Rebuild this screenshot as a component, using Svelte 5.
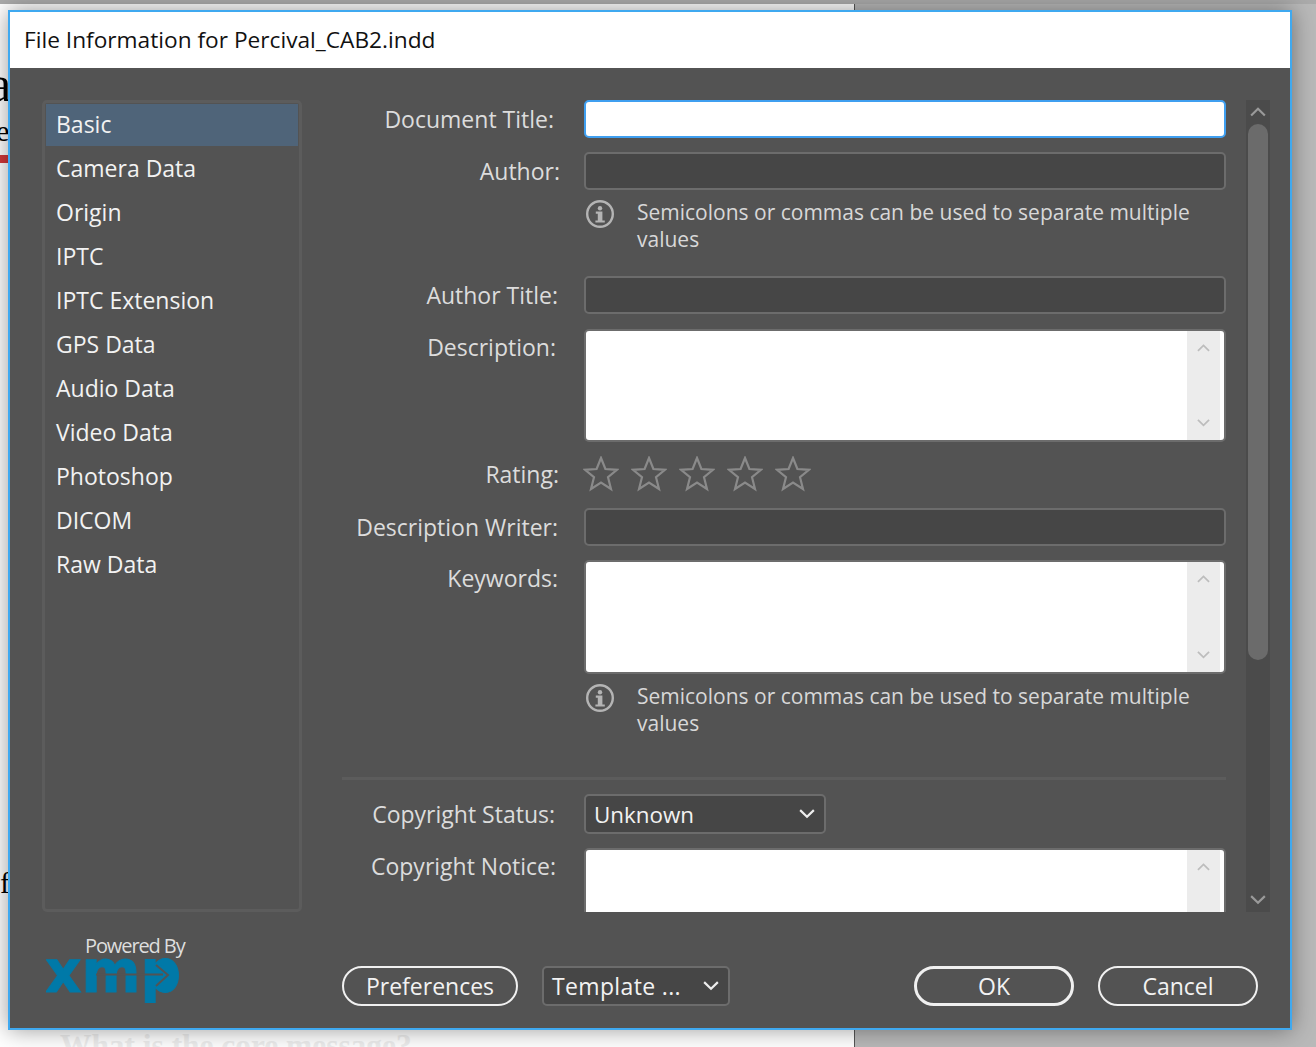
<script lang="ts">
  const categories = ['Basic', 'Camera Data', 'Origin', 'IPTC', 'IPTC Extension', 'GPS Data', 'Audio Data', 'Video Data', 'Photoshop', 'DICOM', 'Raw Data']
  const note = 'Semicolons or commas can be used to separate multiple values'
  const star = 'M18 2 L22.4 13 L34 13.8 L25 21.2 L28 33 L18 26.6 L8 33 L11 21.2 L2 13.8 L13.6 13 Z'
</script>

{#snippet chevron(up, w = 14)}
  <svg class="chev" width={w} height={w * 0.6} viewBox="0 0 14 8.4">
    <path d={up ? 'M1 7.4 L7 1.6 L13 7.4' : 'M1 1 L7 6.8 L13 1'} fill="none" stroke="currentColor" stroke-width="1.9" />
  </svg>
{/snippet}

{#snippet info()}
  <svg class="info" width="30" height="30" viewBox="0 0 30 30">
    <circle cx="15" cy="15" r="12.8" fill="none" stroke="#b4b4b4" stroke-width="2.4" />
    <circle cx="15" cy="9.3" r="2.2" fill="#b4b4b4" />
    <path d="M10.8 12.6 H17.4 V21.4 H19.8 V23.6 H10.4 V21.4 H12.8 V14.8 H10.8 Z" fill="#b4b4b4" />
  </svg>
{/snippet}

{#snippet scrollbox(cls)}
  <div class="area {cls}">
    <div class="area-bar">
      {@render chevron(true, 13)}
      {@render chevron(false, 13)}
    </div>
  </div>
{/snippet}

<div class="desktop">
  <div class="strip"></div>
  <div class="paper">
    <span class="d-a">a</span>
    <span class="d-e">e</span>
    <span class="d-red"></span>
    <span class="d-f">f</span>
    <span class="d-q">What is the core message?</span>
  </div>

  <section class="dialog">
    <header>File Information for Percival_CAB2.indd</header>

    <div class="body">
      <div class="main">
        <ul class="cats">
          {#each categories as cat, i}
            <li class:active={i === 0}>{cat}</li>
          {/each}
        </ul>

        <div class="form-wrap">
          <div class="form">
            <div class="row r-doc">
              <label class="p7">Document Title:</label>
              <div class="input focus"></div>
            </div>
            <div class="row r-author">
              <label class="p1">Author:</label>
              <div class="input"></div>
            </div>
            <div class="note r-note1">
              {@render info()}
              <p>{note}</p>
            </div>
            <div class="row r-atitle">
              <label class="p3">Author Title:</label>
              <div class="input"></div>
            </div>
            <div class="row r-desc">
              <label class="p5 top">Description:</label>
              {@render scrollbox('h113')}
            </div>
            <div class="row r-rating">
              <label class="p2">Rating:</label>
              <div class="stars">
                {#each [0, 1, 2, 3, 4] as s (s)}
                  <svg width="36" height="36" viewBox="0 0 36 36"><path d={star} fill="none" stroke="#8a8a8a" stroke-width="2.2" /></svg>
                {/each}
              </div>
            </div>
            <div class="row r-writer">
              <label class="p3">Description Writer:</label>
              <div class="input"></div>
            </div>
            <div class="row r-key">
              <label class="p3 top">Keywords:</label>
              {@render scrollbox('h114')}
            </div>
            <div class="note r-note2">
              {@render info()}
              <p>{note}</p>
            </div>
            <hr />
            <div class="row r-status">
              <label class="p6">Copyright Status:</label>
              <div class="select wide"><span class="unknown">Unknown</span> {@render chevron(false, 16)}</div>
            </div>
            <div class="row r-notice">
              <label class="p5 top">Copyright Notice:</label>
              {@render scrollbox('h113')}
            </div>
          </div>

          <div class="scrollbar">
            <span class="sb-up">{@render chevron(true, 16)}</span>
            <div class="thumb"></div>
            <span class="sb-down">{@render chevron(false, 16)}</span>
          </div>
        </div>
      </div>

      <footer>
        <div class="xmp">
          <span>Powered By</span>
          <svg width="138" height="46" viewBox="0 0 138 46">
            <text x="-1" y="35" textLength="136" lengthAdjust="spacingAndGlyphs" class="xmp-word">xmp</text>
            <rect x="103" y="9" width="24" height="19" fill="#0079a8" />
            <path d="M50 17.5 H117 M110 8 L122 18 L110 29" fill="none" stroke="#535353" stroke-width="2" />
          </svg>
        </div>
        <div class="buttons">
          <div class="left">
            <button class="pill pref">Preferences</button>
            <div class="select tmpl"><span class="tmpl-label">Template ...</span> {@render chevron(false, 16)}</div>
          </div>
          <div class="right">
            <button class="pill ok">OK</button>
            <button class="pill cancel">Cancel</button>
          </div>
        </div>
      </footer>
    </div>
  </section>
</div>

<style>
  :global(body) {
    margin: 0;
    background: #b9b9b9;
  }

  .desktop {
    position: relative;
    width: 1316px;
    height: 1047px;
    overflow: hidden;
    background: #b9b9b9;
    font-family: 'Open Sans', 'Noto Sans', sans-serif;
  }

  .strip {
    height: 4px;
    background: #ababab;
  }

  .paper {
    position: relative;
    width: 854px;
    height: 1043px;
    background: #fff;
    border-right: 1px solid #555;
    font-family: 'Liberation Serif', serif;
    color: #000;
  }

  .paper span {
    position: absolute;
  }

  .d-a {
    left: -11px;
    top: 50px;
    font-size: 50px;
    line-height: 60px;
  }

  .d-e {
    left: -4px;
    top: 110px;
    font-size: 30px;
    line-height: 34px;
  }

  .d-red {
    left: 0;
    top: 151px;
    width: 10px;
    height: 8px;
    background: #d2383a;
  }

  .d-f {
    left: 0;
    top: 862px;
    font-size: 30px;
    line-height: 34px;
  }

  .d-q {
    left: 60px;
    top: 1025px;
    font-size: 31.4px;
    line-height: 34px;
    font-weight: 700;
    color: #eeeeee;
    white-space: nowrap;
  }

  .dialog {
    position: absolute;
    left: 8px;
    top: 10px;
    width: 1284px;
    height: 1020px;
    box-sizing: border-box;
    border: 2px solid #3fa9f0;
    background: #535353;
    box-shadow: 0 0 22px rgba(0, 0, 0, 0.4);
    display: flex;
    flex-direction: column;
  }

  header {
    height: 56px;
    flex: none;
    background: #fff;
    color: #111;
    font-size: 22.7px;
    line-height: 56px;
    padding-left: 14px;
  }

  .body {
    flex: 1;
    display: flex;
    flex-direction: column;
    padding: 32px 20px 0 32px;
  }

  .main {
    display: flex;
    height: 812px;
    flex: none;
  }

  .cats {
    list-style: none;
    width: 260px;
    height: 812px;
    margin: 0;
    padding: 1px;
    box-sizing: border-box;
    border: 3px solid #5c5c5c;
    border-radius: 5px;
    flex: none;
  }

  .cats li {
    height: 44px;
    line-height: 40px;
    padding-left: 10px;
    font-size: 23px;
    color: #f2f2f2;
  }

  .cats li.active {
    height: 42px;
    margin-bottom: 2px;
    background: #4f6479;
  }

  .form-wrap {
    flex: 1;
    display: flex;
    min-width: 0;
  }

  .form {
    width: 884px;
    flex: none;
    margin-left: 40px;
    height: 812px;
    overflow: hidden;
  }

  .row {
    display: flex;
    align-items: center;
  }

  label {
    width: 242px;
    flex: none;
    box-sizing: border-box;
    text-align: right;
    font-size: 23px;
    color: #dcdcdc;
    white-space: nowrap;
  }

  label.top {
    align-self: flex-start;
    line-height: 36px;
  }

  .p1 { padding-right: 24px; }
  .p2 { padding-right: 25px; }
  .p3 { padding-right: 26px; }
  .p5 { padding-right: 28px; }
  .p6 { padding-right: 29px; }
  .p7 { padding-right: 30px; }

  .input {
    flex: 1;
    height: 38px;
    box-sizing: border-box;
    background: #464646;
    border: 2px solid #6c6c6c;
    border-radius: 5px;
  }

  .input.focus {
    background: #fff;
    border-color: #3f9ff0;
  }

  .area {
    flex: 1;
    box-sizing: border-box;
    background: #fff;
    border: 2px solid #6c6c6c;
    border-radius: 5px;
    display: flex;
    justify-content: flex-end;
    padding-right: 4px;
  }

  .h113 { height: 113px; }
  .h114 { height: 114px; }

  .area-bar {
    width: 33px;
    background: #ececec;
    color: #bdbdbd;
    display: flex;
    flex-direction: column;
    align-items: center;
    justify-content: space-between;
    padding: 13px 0 13px;
    box-sizing: border-box;
    height: 100%;
  }

  .note {
    display: flex;
    padding-left: 243px;
    margin-top: 10px;
    height: 52px;
  }

  .note :global(.info) {
    flex: none;
    margin-top: -1px;
  }

  .note p {
    margin: 0 0 0 22px;
    width: 590px;
    font-size: 21px;
    line-height: 27px;
    color: #d8d8d8;
    margin-top: -1px;
  }

  .r-doc { margin-top: 0; }
  .r-author { margin-top: 14px; }
  .r-atitle { margin-top: 24px; }
  .r-desc { margin-top: 15px; }
  .r-rating { margin-top: 14px; height: 36px; }
  .r-writer { margin-top: 16px; }
  .r-key { margin-top: 14px; }
  .r-status { margin-top: 14px; }
  .r-notice { margin-top: 14px; }

  .stars {
    display: flex;
    gap: 12px;
    margin-left: -1px;
  }

  hr {
    border: 0;
    height: 3px;
    background: #5c5c5c;
    margin: 41px 0 0 0;
  }

  .select {
    box-sizing: border-box;
    height: 40px;
    background: #464646;
    border: 2px solid #6c6c6c;
    border-radius: 5px;
    color: #f2f2f2;
    font-size: 23px;
    line-height: 35px;
    display: flex;
    justify-content: space-between;
    align-items: center;
  }

  .select :global(.chev) {
    color: #eee;
  }

  .unknown {
    font-size: 22.4px;
  }

  .tmpl-label {
    letter-spacing: 0.35px;
  }

  .wide {
    width: 242px;
    padding: 0 9px 0 8px;
  }

  .tmpl {
    width: 188px;
    padding: 0 9px 0 8px;
  }

  .scrollbar {
    width: 24px;
    height: 812px;
    margin-left: 20px;
    background: #4b4b4b;
    display: flex;
    flex-direction: column;
    align-items: center;
    color: #9a9a9a;
    flex: none;
    position: relative;
  }

  .sb-up {
    height: 24px;
    display: flex;
    align-items: center;
  }

  .thumb {
    width: 20px;
    height: 536px;
    background: #6b6b6b;
    border-radius: 10px;
  }

  .sb-down {
    margin-top: auto;
    height: 24px;
    display: flex;
    align-items: center;
  }

  footer {
    display: flex;
    flex: 1;
    position: relative;
  }

  .xmp {
    width: 300px;
    flex: none;
    display: flex;
    flex-direction: column;
    padding: 21px 0 0 4px;
    box-sizing: border-box;
  }

  .xmp span {
    font-size: 20px;
    line-height: 26px;
    color: #dedede;
    padding-left: 39px;
    letter-spacing: -1.1px;
  }

  .xmp svg {
    margin-top: -2px;
  }

  .xmp-word {
    font-family: 'DejaVu Sans', sans-serif;
    font-weight: 700;
    font-size: 58px;
    fill: #0079a8;
    stroke: #0079a8;
    stroke-width: 1px;
  }

  .buttons {
    flex: 1;
    display: flex;
    justify-content: space-between;
    padding-top: 54px;
    padding-right: 12px;
    height: 40px;
  }

  .left, .right {
    display: flex;
    align-items: flex-start;
  }

  .left { gap: 24px; }
  .right { gap: 24px; }

  .pill {
    height: 40px;
    box-sizing: border-box;
    border: 2px solid #f0f0f0;
    border-radius: 20px;
    background: transparent;
    color: #f2f2f2;
    font-family: inherit;
    font-size: 23px;
    padding: 0;
    line-height: 34px;
  }

  .pref { width: 176px; }
  .ok { width: 160px; border-width: 3px; }
  .cancel { width: 160px; }
</style>
